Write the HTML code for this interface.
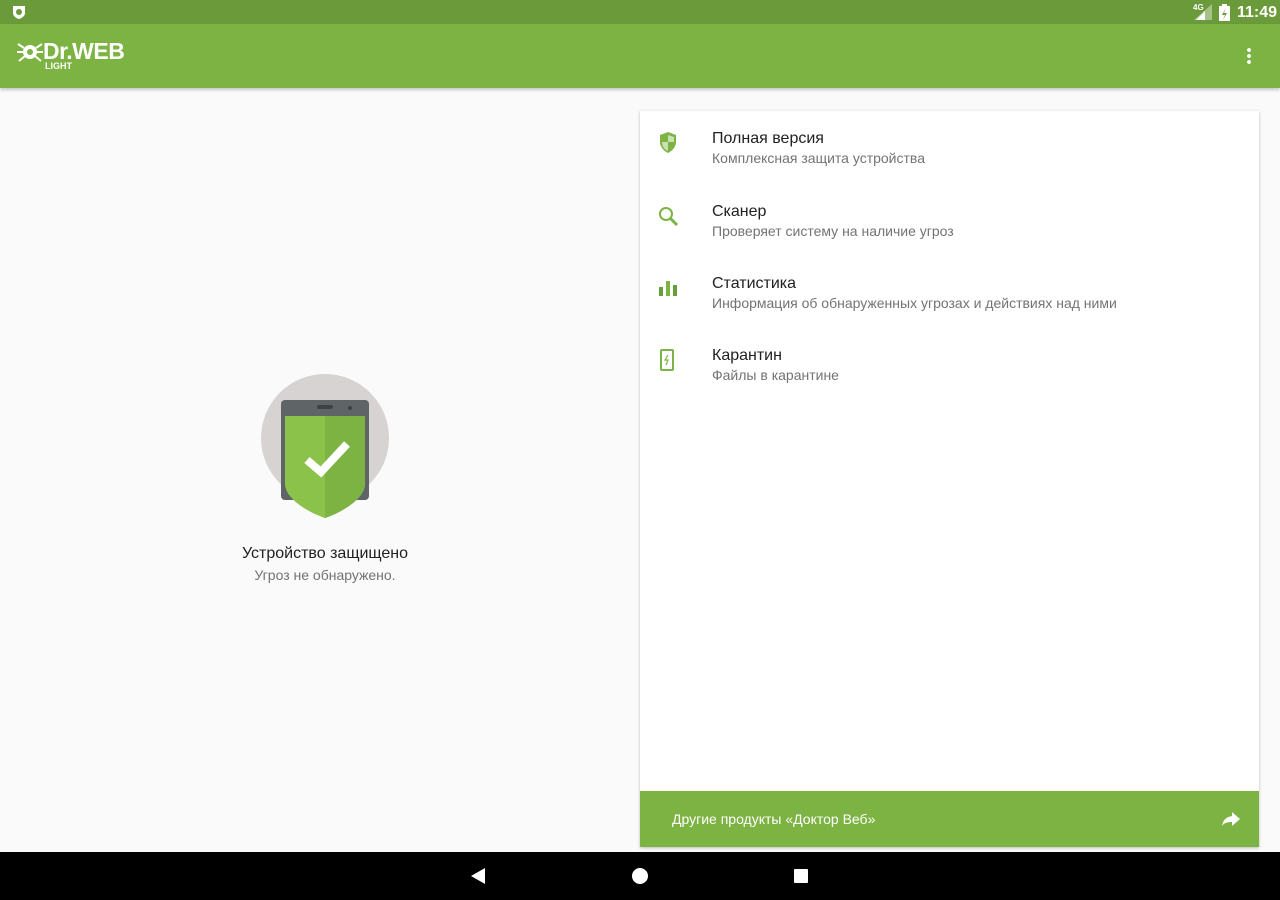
<!DOCTYPE html>
<html><head><meta charset="utf-8"><style>
*{margin:0;padding:0;box-sizing:border-box}
body{width:1280px;height:900px;overflow:hidden;background:#fafafa;font-family:"Liberation Sans",sans-serif;position:relative}
.sb{position:absolute;top:0;left:0;width:1280px;height:24px;background:#6a9a3a;color:#fff}
.ab{position:absolute;top:24px;left:0;width:1280px;height:64px;background:#7cb342;box-shadow:0 2px 3px rgba(0,0,0,.2)}
.card{position:absolute;left:640px;top:111px;width:619px;height:736px;background:#fff;box-shadow:0 1px 3px rgba(0,0,0,.25)}
.it{position:absolute;left:72px;font-size:16px;color:#212121}
.it div{font-size:14px;color:#737373;margin-top:2px}
.ic{position:absolute;left:18px}
.foot{position:absolute;left:0;bottom:0;width:619px;height:56px;background:#7cb342;color:#fff;font-size:14px;padding:20px 0 0 32px}
.nav{position:absolute;top:852px;left:0;width:1280px;height:48px;background:#000}
</style></head><body>
<div class="sb">
<svg style="position:absolute;left:11px;top:4px" width="16" height="16"><path d="M2 2h12v7c0 3-3 5-6 6-3-1-6-3-6-6z" fill="#fff"/><circle cx="8" cy="8" r="3" fill="#6a9a3a"/></svg>
<span style="position:absolute;left:1193px;top:3px;font-size:8px;font-weight:bold">4G</span>
<svg style="position:absolute;left:1194px;top:4px" width="18" height="16"><path d="M18 0V16H0z" fill="#fff" opacity=".4"/><path d="M11 7V16H2z" fill="#fff"/></svg>
<svg style="position:absolute;left:1219px;top:4px" width="11" height="17"><rect x="0" y="2" width="11" height="15" fill="#fff"/><rect x="3" y="0" width="5" height="2" fill="#fff"/><path d="M7 4L3 11h3l-2 5 4-7H5z" fill="#6a9a3a"/></svg>
<span style="position:absolute;left:1237px;top:4px;font-size:16px;font-weight:bold">11:49</span>
</div>
<div class="ab">
<svg style="position:absolute;left:16px;top:16px" width="28" height="24"><circle cx="14" cy="12" r="7" fill="#fff"/><circle cx="14" cy="12" r="3" fill="#7cb342"/><path d="M2 4l6 4M26 4l-6 4M1 12h6M27 12h-6M3 21l6-5M25 21l-6-5" stroke="#fff" stroke-width="2"/></svg>
<span style="position:absolute;left:43px;top:14px;color:#fff;font-weight:bold;font-size:23px;letter-spacing:-0.5px">Dr.WEB</span>
<span style="position:absolute;left:45px;top:37px;color:#fff;font-weight:bold;font-size:9px">LIGHT</span>
<div style="position:absolute;left:1247px;top:23px;width:4px;height:18px;background:radial-gradient(circle,#fff 1.8px,transparent 2px) 0 0/4px 6px"></div>
</div>
<svg style="position:absolute;left:261px;top:374px" width="128" height="146">
<circle cx="64" cy="64" r="64" fill="#d7d3d3"/>
<rect x="20" y="26" width="88" height="100" rx="4" fill="#5f6467"/>
<rect x="56" y="31" width="16" height="4" rx="2" fill="#3e4245"/><circle cx="89" cy="34" r="2" fill="#3e4245"/>
<path d="M24 42h80v68c0 14-22 28-40 34-18-6-40-20-40-34z" fill="#8bc34a"/>
<path d="M64 42h40v68c0 14-22 28-40 34z" fill="#7cb342"/>
<path d="M46 86l14 12 26-28" stroke="#fff" stroke-width="8" fill="none"/>
</svg>
<div style="position:absolute;left:0;width:650px;top:545px;text-align:center;font-size:16px;color:#212121">Устройство защищено</div>
<div style="position:absolute;left:0;width:650px;top:567px;text-align:center;font-size:14px;color:#737373">Угроз не обнаружено.</div>
<div class="card">
<svg class="ic" style="top:21px" width="20" height="22"><path d="M2 3l8-3 8 3v7c0 5-4 9-8 11-4-2-8-6-8-11z" fill="#7cb342"/><path d="M10 3v7h6V5zM4 10h6v9c-3-1-6-4-6-9z" fill="#fff" opacity=".6"/></svg>
<div class="it" style="top:19px">Полная версия<div>Комплексная защита устройства</div></div>
<svg class="ic" style="top:95px" width="22" height="22"><circle cx="8" cy="8" r="6" stroke="#7cb342" stroke-width="2" fill="none"/><path d="M12 12l7 7" stroke="#7cb342" stroke-width="3"/></svg>
<div class="it" style="top:92px">Сканер<div>Проверяет систему на наличие угроз</div></div>
<svg class="ic" style="top:168px" width="20" height="18"><rect x="1" y="8" width="4" height="9" fill="#689f38"/><rect x="8" y="2" width="4" height="15" fill="#7cb342"/><rect x="15" y="6" width="4" height="11" fill="#689f38"/></svg>
<div class="it" style="top:164px">Статистика<div>Информация об обнаруженных угрозах и действиях над ними</div></div>
<svg class="ic" style="top:238px" width="18" height="24"><rect x="3" y="1" width="12" height="20" rx="1" stroke="#7cb342" stroke-width="2" fill="none"/><path d="M10 6l-3 5h3l-2 5" stroke="#7cb342" stroke-width="1.2" fill="none"/></svg>
<div class="it" style="top:236px">Карантин<div>Файлы в карантине</div></div>
<div class="foot">Другие продукты «Доктор Веб»
<svg style="position:absolute;right:18px;top:20px" width="20" height="16"><path d="M11 1l8 7-8 7v-4C6 11 3 12 1 15c1-6 4-9 10-10z" fill="#fff"/></svg></div>
</div>
<div class="nav">
<svg style="position:absolute;left:470px;top:15px" width="16" height="18"><path d="M15 1v16L1 9z" fill="#fff"/></svg>
<div style="position:absolute;left:632px;top:16px;width:16px;height:16px;border-radius:50%;background:#fff"></div>
<div style="position:absolute;left:794px;top:17px;width:14px;height:14px;background:#fff;border-radius:1px"></div>
</div>
</body></html>
